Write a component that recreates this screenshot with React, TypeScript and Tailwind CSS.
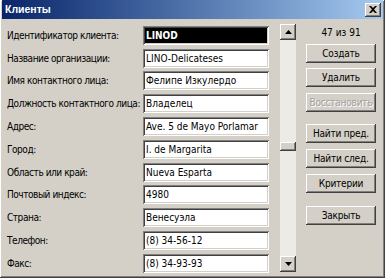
import React from 'react';

const fields: [string, string, boolean?][] = [
  ['Идентификатор клиента:', 'LINOD', true],
  ['Название организации:', 'LINO-Delicateses'],
  ['Имя контактного лица:', 'Фелипе Изкулердо'],
  ['Должность контактного лица:', 'Владелец'],
  ['Адрес:', 'Ave. 5 de Mayo Porlamar'],
  ['Город:', 'I. de Margarita'],
  ['Область или край:', 'Nueva Esparta'],
  ['Почтовый индекс:', '4980'],
  ['Страна:', 'Венесуэла'],
  ['Телефон:', '(8) 34-56-12'],
  ['Факс:', '(8) 34-93-93'],
];

const raised =
  'shadow-[inset_-1px_-1px_#404040,inset_1px_1px_#ffffff,inset_-2px_-2px_#808080,inset_2px_2px_#d4d0c8]';
const sunken =
  'shadow-[inset_1px_1px_#808080,inset_-1px_-1px_#ffffff,inset_2px_2px_#404040,inset_-2px_-2px_#d4d0c8]';

function Btn({ label, disabled, className }: { label: string; disabled?: boolean; className?: string }) {
  return (
    <div
      className={`w-[70px] h-[19px] flex items-center justify-center whitespace-nowrap tracking-[-0.2px] bg-[#d4d0c8] ${raised} ${
        disabled ? 'text-[#a0a0a0] [text-shadow:1px_1px_#ffffff]' : 'text-black'
      } ${className ?? ''}`}
    >
      {label}
    </div>
  );
}

export default function App() {
  return (
    <div
      className="w-[385px] h-[278px] bg-[#d4d0c8] flex flex-col text-[10px] text-black shadow-[inset_-1px_-1px_#404040,inset_1px_1px_#ffffff,inset_-2px_-2px_#808080]"
      style={{ fontFamily: '"DejaVu Sans Condensed", "Liberation Sans", sans-serif' }}
    >
      {/* title bar */}
      <div className="mx-[2px] h-[19px] flex items-center justify-between pl-[3px] pr-[2px] bg-gradient-to-r from-[#0a246a] to-[#a6caf0]">
        <span className="text-white font-bold text-[10.5px] [font-family:'Liberation_Sans',sans-serif]">Клиенты</span>
        <div className={`w-[16px] h-[14px] flex items-center justify-center bg-[#d4d0c8] ${raised}`}>
          <svg width="8" height="7" viewBox="0 0 8 7">
            <path d="M0 0h2l2 2 2-2h2L5 3.5 8 7H6L4 5 2 7H0l3-3.5z" fill="#000" />
          </svg>
        </div>
      </div>

      <div className="flex pt-[5px]">
        {/* fields */}
        <div className="flex flex-col pl-[7px] w-[270px]">
          {fields.map(([label, value, sel]) => (
            <div key={label} className="h-[22.8px] flex items-center">
              <span className="w-[136px] shrink-0 whitespace-nowrap tracking-[-0.45px]">{label}</span>
              <div
                className={`w-[126px] h-[19px] flex items-center px-[3px] whitespace-nowrap overflow-hidden ${sunken} ${
                  sel ? 'bg-black text-white font-bold' : 'bg-white'
                }`}
              >
                {value}
              </div>
            </div>
          ))}
        </div>

        {/* scrollbar */}
        <div className="ml-[10px] w-[16px] h-[248px] flex flex-col bg-[#ecebe6]">
          <div className={`h-[16px] flex items-center justify-center bg-[#d4d0c8] ${raised}`}>
            <svg width="7" height="4" viewBox="0 0 7 4">
              <path d="M3.5 0L7 4H0z" fill="#000" />
            </svg>
          </div>
          <div className="flex-1 flex flex-col pt-[102px]">
            <div className={`h-[9px] bg-[#d4d0c8] ${raised}`} />
          </div>
          <div className={`h-[16px] flex items-center justify-center bg-[#d4d0c8] ${raised}`}>
            <svg width="7" height="4" viewBox="0 0 7 4">
              <path d="M0 0h7L3.5 4z" fill="#000" />
            </svg>
          </div>
        </div>

        {/* right panel */}
        <div className="ml-[10px] flex flex-col items-center w-[70px]">
          <div className="h-[17px] flex items-center">47 из 91</div>
          <Btn label="Создать" className="mt-[3px]" />
          <Btn label="Удалить" className="mt-[5px]" />
          <Btn label="Восстановить" disabled className="mt-[6px]" />
          <Btn label="Найти пред." className="mt-[12px]" />
          <Btn label="Найти след." className="mt-[6px]" />
          <Btn label="Критерии" className="mt-[6px]" />
          <Btn label="Закрыть" className="mt-[13px]" />
        </div>
      </div>
    </div>
  );
}
